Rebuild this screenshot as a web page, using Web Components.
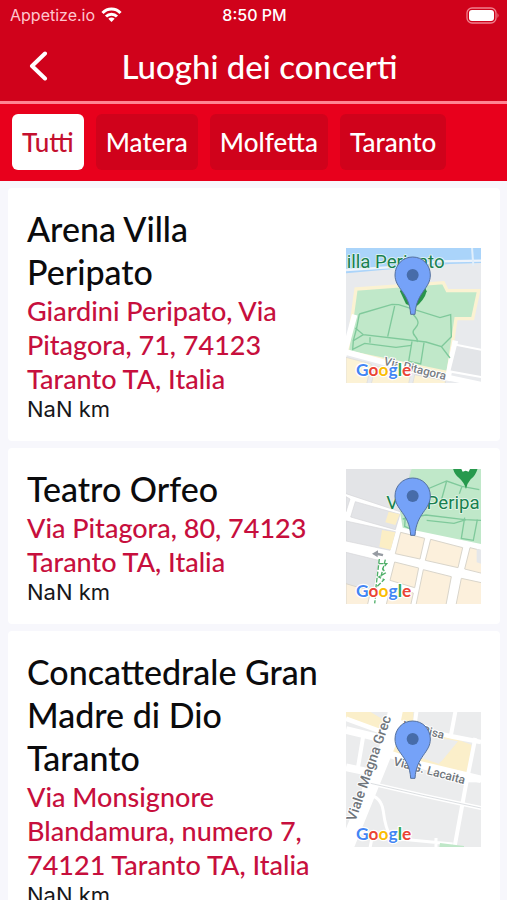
<!DOCTYPE html>
<html lang="it">
<head>
<meta charset="UTF-8">
<meta name="viewport" content="width=device-width, initial-scale=1">
<title>Luoghi dei concerti</title>
<style>
  body {
    margin: 0;
    background-color: #f7f7fc;
    font-family: Lato, 'Open Sans', sans-serif;
    color: #0b0b0d;
  }
</style>
</head>
<body>
<concerti-app></concerti-app>

<script>
class StatusBar extends HTMLElement {
  constructor() {
    super();
    this.attachShadow({ mode: 'open' });
    this.shadowRoot.innerHTML = /*html*/`
      <style>
        :host {
          display: grid;
          grid-template-columns: 1fr auto 1fr;
          align-items: center;
          height: 30px;
          padding: 0 8px 0 10px;
          font-family: Inter, sans-serif;
          font-size: 16px;
          color: #fff;
        }
        .carrier {
          display: flex;
          align-items: center;
          gap: 6px;
          color: #ffc6cf;
        }
        .time {
          font-weight: 500;
        }
        .battery {
          justify-self: end;
        }
        svg {
          display: block;
        }
      </style>
      <div class="carrier">
        <span>Appetize.io</span>
        <svg width="21" height="16" viewBox="0 0 21 16" fill="none" stroke="#fff" stroke-width="3">
          <path d="M1.5 6 C6.500 .8 14.500 .8 19.500 6"/>
          <path d="M5 9.500 C8 6.400 13 6.400 16 9.500"/>
          <path d="M10.500 15 L7.300 11.800 C9.200 10.200 11.800 10.200 13.700 11.800Z" fill="#fff" stroke="none"/>
        </svg>
      </div>
      <div class="time">8:50 PM</div>
      <svg class="battery" width="33" height="17" viewBox="0 0 33 17">
        <rect x="1" y="1" width="29" height="15" rx="5" fill="none" stroke="#f0808d" stroke-width="1.300"/>
        <rect x="3" y="3" width="25" height="11" rx="3" fill="#fff"/>
        <path d="M31.500 6 Q33.500 8.500 31.500 11Z" fill="#f0808d"/>
      </svg>
    `;
  }
}

class PageHeader extends HTMLElement {
  constructor() {
    super();
    this.attachShadow({ mode: 'open' });
    this.shadowRoot.innerHTML = /*html*/`
      <style>
        :host {
          display: grid;
          grid-template-columns: 60px 1fr 48px;
          align-items: center;
          height: 71px;
          border-bottom: 3px solid #ff8493;
          color: #fff;
        }
        button {
          display: flex;
          justify-content: flex-end;
          padding: 8px 12px 8px 0;
          border: 0;
          background: none;
          cursor: pointer;
        }
        h1 {
          margin: 0;
          font-size: 33px;
          line-height: 38px;
          font-weight: 500;
          text-align: center;
        }
      </style>
      <button type="button" aria-label="Indietro">
        <svg width="20" height="30" viewBox="0 0 20 30" fill="none" stroke="#fff" stroke-width="4" stroke-linecap="round" stroke-linejoin="round">
          <path d="M17 2.500 L4 15 L17 27.500"/>
        </svg>
      </button>
      <h1><slot></slot></h1>
    `;
  }
}

class CityTabs extends HTMLElement {
  constructor() {
    super();
    this.attachShadow({ mode: 'open' });
    this.citta = ['Tutti', 'Matera', 'Molfetta', 'Taranto'];
    this.shadowRoot.innerHTML = /*html*/`
      <style>
        :host {
          display: flex;
          gap: 12px;
          padding: 10px 12px 11px;
          background-color: #e8001c;
        }
        button {
          height: 56px;
          padding: 0 10px;
          border: 0;
          border-radius: 6px;
          background-color: #d0021b;
          color: #fff;
          font: inherit;
          font-size: 26px;
          font-weight: 500;
          cursor: pointer;
        }
        button[aria-pressed="true"] {
          background-color: #fff;
          color: #c4102f;
        }
      </style>
      ${this.citta.map((c, i) => `<button type="button" aria-pressed="${i === 0}">${c}</button>`).join('')}
    `;
  }

  connectedCallback() {
    const buttons = this.shadowRoot.querySelectorAll('button');
    buttons.forEach(button => {
      button.addEventListener('click', () => {
        buttons.forEach(b => b.setAttribute('aria-pressed', b === button));
      });
    });
  }
}

// Three map units per pixel
const mappe = {
  peripato: /*html*/`
    <rect width="450" height="450" fill="#e8eaed"/>
    <path d="M0 0 H450 V66 L330 70 L20 98Z" fill="#aad4fa"/>
    <path d="M20 88 L180 78 L300 62 L425 60" fill="none" stroke="#edf3fb" stroke-width="7"/>
    <path d="M398 20 L402 75" stroke="#e1effb" stroke-width="6"/>
    <path d="M50 145 L312 126 L324 150 L418 150 L400 234 L350 234 L326 396 L24 334Z" fill="#c0e8c9" stroke="#fbf2d2" stroke-width="10"/>
    <path d="M46 222 L12 350 M12 332 L220 388 L425 432 M348 300 L324 420" fill="none" stroke="#fff" stroke-width="17"/>
    <path d="M350 312 L430 328 V410 L330 392Z" fill="#e3e5e8" stroke="#fff" stroke-width="6"/>
    <path d="M20 350 L96 370 L82 430 H20Z M108 376 L214 398 L208 430 H96Z M226 402 L318 420 V430 H220Z" fill="#fcf2d5" stroke="#d9d9d9" stroke-width="2"/>
    <g fill="none" stroke="#7fc99b" stroke-width="4">
      <path d="M60 220 L158 191 L178 192 L302 231 L334 222 L336 288 L306 318"/>
      <path d="M48 262 L72 282 L260 304 L306 318 L332 352 M72 282 L42 300 L40 326 L76 308 L170 320 L216 314 M92 290 V306"/>
      <path d="M166 196 L145 288 M222 222 C248 248 232 256 222 270 C216 285 238 288 234 304"/>
      <path d="M218 302 L208 362 L244 370 L254 306 M60 220 L52 262 L42 300"/>
    </g>
    <text x="22" y="82" font-size="56" font-weight="400" fill="#188050" stroke="#e5f4f1" stroke-width="5">illa Peripato</text>
    <path d="M182 152 A41 41 0 0 1 262 152 Q256 178 226 202 L200 190Z" fill="#27944a"/>
    <text x="132" y="372" font-size="35" fill="#777c83" stroke="#fff" stroke-width="6" transform="rotate(14 132 372)">Via Pitagora</text>`,
  orfeo: /*html*/`
    <rect width="450" height="450" fill="#fff"/>
    <path d="M0 0 H220 L188 152 L20 96Z M20 105 L32 112 L20 150Z M48 120 L182 158 L168 204 L34 166Z M20 178 L168 210 L152 266 L20 238Z M20 272 L118 296 L100 390 L20 368Z" fill="#e3e4e7" stroke="#d6d7da" stroke-width="2"/>
    <path d="M148 150 L181 158 L168 190 L138 182Z M128 205 L168 212 L154 264 L120 256Z" fill="#fbeec5"/>
    <path d="M222 0 H450 V252 L190 198 L182 150Z" fill="#c0e8c9"/>
    <g fill="#fcf0dc" stroke="#d9d5cb" stroke-width="3">
      <path d="M184 212 L256 230 L242 292 L168 276Z"/>
      <path d="M274 233 L370 258 L356 318 L258 296Z"/>
      <path d="M392 258 L440 270 V338 L376 322Z"/>
      <path d="M166 301 L238 319 L226 378 L152 356Z"/>
      <path d="M252 324 L336 345 L318 440 H228Z"/>
      <path d="M366 350 L440 366 V440 H348Z"/>
      <path d="M154 376 L222 394 L212 440 H138Z M20 366 L94 388 L82 440 H20Z"/>
    </g>
    <path d="M412 262 L425 265 V306 L412 302Z" fill="#e5e7ea"/>
    <g fill="none" stroke="#7fc99b" stroke-width="4">
      <path d="M236 94 L322 58 L368 74 L420 84 M322 58 L302 130 M368 74 L360 96 M190 172 L260 160 L376 174 L425 176"/>
      <path d="M376 168 L366 230 L402 236 L414 174 M262 176 L344 185 L380 174 M198 164 L196 194 L218 204"/>
    </g>
    <path d="M340 16 H416 Q410 42 394 53 Q384 64 380 82 Q374 62 360 50 Q344 38 340 16Z" fill="#27994d"/>
    <path d="M366 22 H392 L388 30 L379 27 L370 30Z" fill="#fff"/>
    <path d="M120 292 L108 392 M138 294 L124 348 M118 306 H142 L130 320 L138 334 L118 346 L134 354 L112 376 L106 425" fill="none" stroke="#4faf69" stroke-width="4" stroke-dasharray="14 5"/>
    <path d="M98 276 L116 266 V273 L132 277 L130 284 L115 281 V287Z" fill="#969ba2"/>
    <text x="141" y="142" font-size="56" font-weight="400" fill="#188050" stroke="#e9f7ec" stroke-width="5">Villa Peripa</text>`,
  concattedrale: /*html*/`
    <rect width="450" height="450" fill="#ebeced"/>
    <path d="M20 20 L90 20 L138 48 L120 86 L20 42Z M160 20 H222 V56 L320 92 L396 120 L382 214 L220 180 L148 142Z" fill="#fbefca"/>
    <path d="M220 84 L356 110 L300 178 L240 158Z" fill="#ebeced"/>
    <path d="M320 160 Q370 155 396 120 L386 204 L298 176Z" fill="#fbefca"/>
    <g fill="none" stroke="#fff">
      <path d="M172 0 L150 110 L20 430" stroke-width="44"/>
      <path d="M20 76 L120 100 M20 188 L98 204 M150 148 L240 180 L425 224" stroke-width="23"/>
      <path d="M20 42 L134 84 M166 48 L240 72 L340 96 L425 112" stroke-width="14"/>
      <path d="M72 92 L56 188 M234 0 L226 60 M352 0 L334 96 M408 100 L378 250 L346 425 M94 236 L250 272 L425 310" stroke-width="12"/>
      <path d="M50 382 L190 404 L340 418 M88 270 Q126 276 132 320 Q138 372 156 400 M100 390 L92 430 M290 400 V430" stroke-width="9"/>
      <path d="M378 228 H425" stroke-width="10"/>
    </g>
    <path d="M94 236 L250 272 L425 310" fill="none" stroke="#c9cdd1" stroke-width="2"/>
    <path d="M302 415 L374 424 V440 H298Z" fill="#bfe7c8"/>
    <g fill="#6f757b" stroke="#fff" stroke-width="6">
      <text x="48" y="352" font-size="42" transform="rotate(-71 48 352)">Viale Magna Grec</text>
      <text x="188" y="72" font-size="35" transform="rotate(14 188 72)">Via Pisa</text>
      <text x="160" y="181" font-size="36" transform="rotate(15 160 181)">Via G. Lacaita</text>
    </g>`
};

class StaticMap extends HTMLElement {
  constructor() {
    super();
    this.attachShadow({ mode: 'open' });
  }

  connectedCallback() {
    this.shadowRoot.innerHTML = /*html*/`
      <style>
        :host {
          display: block;
        }
        svg {
          display: block;
          width: 100%;
          font-weight: 500;
        }
        text {
          font-family: Roboto, sans-serif;
          paint-order: stroke;
          stroke-linejoin: round;
        }
        .google {
          font-family: Lato, sans-serif;
          font-size: 52px;
          font-weight: 700;
        }
      </style>
      <svg viewBox="20 22 405 405" role="img" aria-label="Mappa">
        ${mappe[this.getAttribute('luogo')]}
        <path d="M220 49 C190 49 167 73 167 103 C167 145 210 154 214 221 H227 C231 154 273 145 273 103 C273 73 250 49 220 49Z" fill="#75a2f8" stroke="#55719f" stroke-width="3"/>
        <circle cx="220" cy="103" r="18" fill="#476ca9"/>
        <text class="google" x="50" y="406" stroke="#fff" stroke-width="7"><tspan fill="#4285f4">G</tspan><tspan fill="#ea4335">o</tspan><tspan fill="#fbbc05">o</tspan><tspan fill="#4285f4">g</tspan><tspan fill="#34a853">l</tspan><tspan fill="#ea4335">e</tspan></text>
      </svg>
    `;
  }
}

class VenueCard extends HTMLElement {
  constructor() {
    super();
    this.attachShadow({ mode: 'open' });
    this.shadowRoot.innerHTML = /*html*/`
      <style>
        :host {
          display: flex;
          align-items: center;
          gap: 26px;
          padding: 19px 19px 18px;
          border-radius: 4px;
          background-color: #fff;
        }
        .info {
          flex: 1;
          min-width: 0;
        }
        h2, p {
          margin: 0;
        }
        h2 {
          font-size: 34px;
          line-height: 43px;
          font-weight: 500;
        }
        .address {
          margin-top: 1px;
          font-size: 27px;
          line-height: 34px;
          font-weight: 500;
          color: #c70f3d;
        }
        .distance {
          font-family: Inter, sans-serif;
          font-size: 22px;
          line-height: 27px;
          color: #17171a;
        }
        ::slotted(static-map) {
          flex: none;
          width: 135px;
        }
      </style>
      <div class="info">
        <h2><slot name="nome"></slot></h2>
        <p class="address"><slot name="indirizzo"></slot></p>
        <p class="distance"><slot name="distanza"></slot></p>
      </div>
      <slot></slot>
    `;
  }
}

class ConcertiApp extends HTMLElement {
  constructor() {
    super();
    this.attachShadow({ mode: 'open' });
    this.luoghi = [
      { mappa: 'peripato', nome: 'Arena Villa Peripato', indirizzo: 'Giardini Peripato, Via Pitagora, 71, 74123 Taranto TA, Italia' },
      { mappa: 'orfeo', nome: 'Teatro Orfeo', indirizzo: 'Via Pitagora, 80, 74123 Taranto TA, Italia' },
      { mappa: 'concattedrale', nome: 'Concattedrale Gran Madre di Dio Taranto', indirizzo: 'Via Monsignore Blandamura, numero 7, 74121 Taranto TA, Italia' }
    ];
    this.shadowRoot.innerHTML = /*html*/`
      <style>
        :host {
          display: flex;
          flex-direction: column;
          height: 100vh;
          overflow: hidden;
        }
        header {
          flex: none;
          background-color: #d0021b;
        }
        main {
          flex: 1;
          min-height: 0;
          overflow-y: auto;
          scrollbar-width: none;
          display: flex;
          flex-direction: column;
          gap: 7px;
          padding: 7px 7px 7px 8px;
        }
        venue-card {
          flex: none;
        }
      </style>
      <header>
        <status-bar></status-bar>
        <page-header>Luoghi dei concerti</page-header>
        <city-tabs></city-tabs>
      </header>
      <main>
        ${this.luoghi.map(l => `
          <venue-card>
            <span slot="nome">${l.nome}</span>
            <span slot="indirizzo">${l.indirizzo}</span>
            <span slot="distanza">NaN km</span>
            <static-map luogo="${l.mappa}"></static-map>
          </venue-card>
        `).join('')}
      </main>
    `;
  }
}

customElements.define('status-bar', StatusBar);
customElements.define('page-header', PageHeader);
customElements.define('city-tabs', CityTabs);
customElements.define('static-map', StaticMap);
customElements.define('venue-card', VenueCard);
customElements.define('concerti-app', ConcertiApp);
</script>
</body>
</html>
